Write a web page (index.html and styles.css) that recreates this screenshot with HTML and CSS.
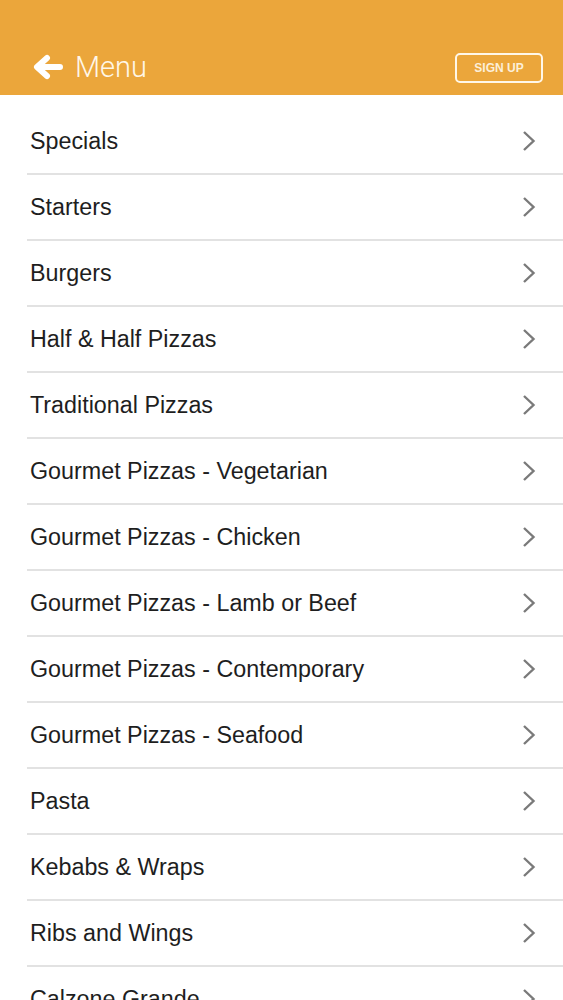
FILE: index.html
```html
<!DOCTYPE html>
<html>
<head>
<meta charset="utf-8">
<link rel="stylesheet" href="styles.css">
</head>
<body>
<header class="topbar">
  <div class="title">
    <svg class="back" width="30" height="26" viewBox="0 0 30 26">
      <path d="M27 13 H6 M14 4 L4 13 L14 22" fill="none" stroke="#fff" stroke-width="6" stroke-linecap="round" stroke-linejoin="round"/>
    </svg>
    <span class="title-text">Menu</span>
  </div>
  <button class="signup">SIGN UP</button>
</header>
<ul class="menu">
  <li class="item"><span>Specials</span><svg class="chev" viewBox="0 0 14 22"><path d="M2 2 L11.5 11 L2 20" fill="none" stroke="#7a7a7a" stroke-width="2.4"/></svg></li>
  <li class="item"><span>Starters</span><svg class="chev" viewBox="0 0 14 22"><path d="M2 2 L11.5 11 L2 20" fill="none" stroke="#7a7a7a" stroke-width="2.4"/></svg></li>
  <li class="item"><span>Burgers</span><svg class="chev" viewBox="0 0 14 22"><path d="M2 2 L11.5 11 L2 20" fill="none" stroke="#7a7a7a" stroke-width="2.4"/></svg></li>
  <li class="item"><span>Half &amp; Half Pizzas</span><svg class="chev" viewBox="0 0 14 22"><path d="M2 2 L11.5 11 L2 20" fill="none" stroke="#7a7a7a" stroke-width="2.4"/></svg></li>
  <li class="item"><span>Traditional Pizzas</span><svg class="chev" viewBox="0 0 14 22"><path d="M2 2 L11.5 11 L2 20" fill="none" stroke="#7a7a7a" stroke-width="2.4"/></svg></li>
  <li class="item"><span>Gourmet Pizzas - Vegetarian</span><svg class="chev" viewBox="0 0 14 22"><path d="M2 2 L11.5 11 L2 20" fill="none" stroke="#7a7a7a" stroke-width="2.4"/></svg></li>
  <li class="item"><span>Gourmet Pizzas - Chicken</span><svg class="chev" viewBox="0 0 14 22"><path d="M2 2 L11.5 11 L2 20" fill="none" stroke="#7a7a7a" stroke-width="2.4"/></svg></li>
  <li class="item"><span>Gourmet Pizzas - Lamb or Beef</span><svg class="chev" viewBox="0 0 14 22"><path d="M2 2 L11.5 11 L2 20" fill="none" stroke="#7a7a7a" stroke-width="2.4"/></svg></li>
  <li class="item"><span>Gourmet Pizzas - Contemporary</span><svg class="chev" viewBox="0 0 14 22"><path d="M2 2 L11.5 11 L2 20" fill="none" stroke="#7a7a7a" stroke-width="2.4"/></svg></li>
  <li class="item"><span>Gourmet Pizzas - Seafood</span><svg class="chev" viewBox="0 0 14 22"><path d="M2 2 L11.5 11 L2 20" fill="none" stroke="#7a7a7a" stroke-width="2.4"/></svg></li>
  <li class="item"><span>Pasta</span><svg class="chev" viewBox="0 0 14 22"><path d="M2 2 L11.5 11 L2 20" fill="none" stroke="#7a7a7a" stroke-width="2.4"/></svg></li>
  <li class="item"><span>Kebabs &amp; Wraps</span><svg class="chev" viewBox="0 0 14 22"><path d="M2 2 L11.5 11 L2 20" fill="none" stroke="#7a7a7a" stroke-width="2.4"/></svg></li>
  <li class="item"><span>Ribs and Wings</span><svg class="chev" viewBox="0 0 14 22"><path d="M2 2 L11.5 11 L2 20" fill="none" stroke="#7a7a7a" stroke-width="2.4"/></svg></li>
  <li class="item"><span>Calzone Grande</span><svg class="chev" viewBox="0 0 14 22"><path d="M2 2 L11.5 11 L2 20" fill="none" stroke="#7a7a7a" stroke-width="2.4"/></svg></li>
</ul>
</body>
</html>
```
FILE: styles.css
```css
html, body {
  margin: 0;
  padding: 0;
  background: #fff;
  overflow: hidden;
}
body {
  font-family: "Liberation Sans", Arial, sans-serif;
}
.topbar {
  height: 95px;
  background: #eba63b;
  display: flex;
  align-items: flex-end;
  justify-content: space-between;
  padding: 0 20px 12px 33px;
  box-sizing: border-box;
}
.title {
  display: flex;
  align-items: center;
  gap: 12px;
  margin-bottom: -2px;
}
.back {
  display: block;
  width: 30px;
  height: 26px;
}
.title-text {
  font-family: "Roboto", "Liberation Sans", sans-serif;
  font-weight: 300;
  font-size: 29px;
  color: #fff7e8;
  line-height: 36px;
}
.signup {
  width: 88px;
  height: 30px;
  background: transparent;
  border: 2.5px solid #fff7e8;
  border-radius: 5px;
  color: #fcefd8;
  font-family: "Liberation Sans", Arial, sans-serif;
  font-weight: bold;
  font-size: 12px;
  padding: 0;
}
.menu {
  list-style: none;
  margin: 0;
  padding: 14px 0 0 27px;
}
.item {
  height: 64px;
  border-bottom: 2px solid #e2e2e2;
  display: flex;
  align-items: center;
  justify-content: space-between;
  padding: 0 27px 0 3px;
  font-size: 23.3px;
  color: #1e1e1e;
}
.chev {
  width: 14px;
  height: 22px;
  display: block;
}
```
